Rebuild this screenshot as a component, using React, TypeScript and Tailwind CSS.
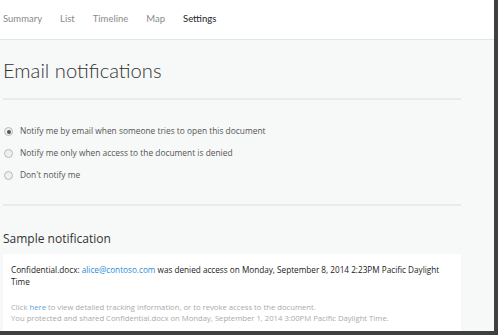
import React from 'react';

const tabs = ['Summary', 'List', 'Timeline', 'Map', 'Settings'];

const options = [
    { label: 'Notify me by email when someone tries to open this document', checked: true },
    { label: 'Notify me only when access to the document is denied', checked: false },
    { label: "Don't notify me", checked: false },
];

function Radio({ checked }: { checked: boolean }) {
    return (
        <span className="flex h-[9px] w-[9px] items-center justify-center rounded-full border border-[#b9bcbc] bg-[#eeefef]">
            {checked && <span className="h-[4px] w-[4px] rounded-full bg-[#555]" />}
        </span>
    );
}

export default function App() {
    return (
        <div className="h-[335px] w-[498px] overflow-hidden bg-[#404040] pr-[4px] pb-[4px] font-['Open_Sans',sans-serif]">
            <div className="h-[331px] w-[494px] overflow-hidden bg-[#f7f8f8]">
                <nav className="flex h-[40px] items-center gap-[18px] border-b border-[#e3e5e5] bg-white pl-[3px] font-['Lato',sans-serif] text-[9.5px] text-[#8a8a8a]">
                    {tabs.map((tab) => (
                        <span key={tab} className={tab === 'Settings' ? 'text-[#222]' : ''}>
                            {tab}
                        </span>
                    ))}
                </nav>

                <div className="w-[461px] pl-[3px]">
                    <h1 className="pt-[15px] font-['Lato',sans-serif] text-[20.2px] leading-[30px] font-light text-[#333]">Email notifications</h1>
                    <div className="mt-[13px] h-[2px] bg-[#e9ebeb]" />

                    <div className="flex flex-col gap-[9px] pt-[25px] pl-[1px] text-[8.4px] text-[#555]">
                        {options.map((o) => (
                            <label key={o.label} className="flex h-[13px] items-center gap-[7px]">
                                <Radio checked={o.checked} />
                                <span>{o.label}</span>
                            </label>
                        ))}
                    </div>

                    <div className="mt-[22px] h-[2px] bg-[#e9ebeb]" />
                    <h2 className="pt-[24px] text-[12px] leading-[18px] text-[#333]">Sample notification</h2>

                    <div className="mt-[6px] h-[100px] bg-white px-[8px] pt-[10px]">
                        <p className="text-[8.2px] leading-[12px] text-[#222]">
                            Confidential.docx: <span className="text-[#1f8dd6]">alice@contoso.com</span> was denied access on Monday, September 8, 2014 2:23PM Pacific Daylight
                            <br />
                            Time
                        </p>
                        <p className="mt-[14px] text-[7.7px] leading-[11px] text-[#aaa]">
                            Click <span className="text-[#55a7dd]">here</span> to view detailed tracking information, or to revoke access to the document.
                            <br />
                            You protected and shared Confidential.docx on Monday, September 1, 2014 3:00PM Pacific Daylight Time.
                        </p>
                    </div>
                </div>
            </div>
        </div>
    );
}
